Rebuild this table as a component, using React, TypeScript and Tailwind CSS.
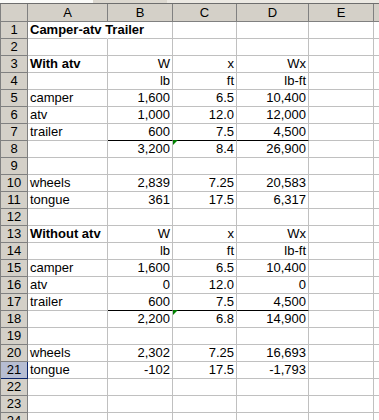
import React from "react";

type Cell = { t?: string; b?: boolean; r?: boolean; under?: boolean; tri?: boolean; overflow?: boolean };

const rows: Record<number, (Cell | null)[]> = {
  1: [{ t: "Camper-atv Trailer", b: true, overflow: true }],
  3: [{ t: "With atv", b: true }, { t: "W", r: true }, { t: "x", r: true }, { t: "Wx", r: true }],
  4: [null, { t: "lb", r: true }, { t: "ft", r: true }, { t: "lb-ft", r: true }],
  5: [{ t: "camper" }, { t: "1,600", r: true }, { t: "6.5", r: true }, { t: "10,400", r: true }],
  6: [{ t: "atv" }, { t: "1,000", r: true }, { t: "12.0", r: true }, { t: "12,000", r: true }],
  7: [{ t: "trailer" }, { t: "600", r: true, under: true }, { t: "7.5", r: true, under: true }, { t: "4,500", r: true, under: true }],
  8: [null, { t: "3,200", r: true }, { t: "8.4", r: true, tri: true }, { t: "26,900", r: true }],
  10: [{ t: "wheels" }, { t: "2,839", r: true }, { t: "7.25", r: true }, { t: "20,583", r: true }],
  11: [{ t: "tongue" }, { t: "361", r: true }, { t: "17.5", r: true }, { t: "6,317", r: true }],
  13: [{ t: "Without atv", b: true }, { t: "W", r: true }, { t: "x", r: true }, { t: "Wx", r: true }],
  14: [null, { t: "lb", r: true }, { t: "ft", r: true }, { t: "lb-ft", r: true }],
  15: [{ t: "camper" }, { t: "1,600", r: true }, { t: "6.5", r: true }, { t: "10,400", r: true }],
  16: [{ t: "atv" }, { t: "0", r: true }, { t: "12.0", r: true }, { t: "0", r: true }],
  17: [{ t: "trailer" }, { t: "600", r: true, under: true }, { t: "7.5", r: true, under: true }, { t: "4,500", r: true, under: true }],
  18: [null, { t: "2,200", r: true }, { t: "6.8", r: true, tri: true }, { t: "14,900", r: true }],
  20: [{ t: "wheels" }, { t: "2,302", r: true }, { t: "7.25", r: true }, { t: "16,693", r: true }],
  21: [{ t: "tongue" }, { t: "-102", r: true }, { t: "17.5", r: true }, { t: "-1,793", r: true }],
};

const colWidths = ["w-[80px]", "w-[65px]", "w-[64px]", "w-[72px]", "w-[65px]"];

function DataCell({ cell, w }: { cell: Cell | null; w: string }) {
  const c = cell || {};
  return (
    <div
      className={`relative h-[17px] shrink-0 ${w} border-r border-b ${c.overflow ? "border-r-transparent" : "border-r-[#c0c0c0]"} ${c.under ? "border-b-black" : "border-b-[#c0c0c0]"} flex items-center ${c.r ? "justify-end pr-[2px]" : "justify-start pl-[2px]"} whitespace-nowrap`}
    >
      {c.tri && (
        <div className="absolute left-0 -top-px w-0 h-0 border-t-[5px] border-t-[#008000] border-r-[5px] border-r-transparent" />
      )}
      {c.t && <span className={`relative z-10 leading-[16px] ${c.b ? "font-bold" : ""}`}>{c.t}</span>}
    </div>
  );
}

export default function App() {
  const rowNums = Array.from({ length: 24 }, (_, i) => i + 1);
  return (
    <div className="w-[379px] h-[420px] overflow-hidden bg-white text-[13px] text-black font-['Liberation_Sans',Arial,sans-serif]">
      <div className="flex h-[3px]">
        <div className="w-[93px] bg-[#fbfbf9]" />
        <div className="w-[74px] bg-[#dcd8d0]" />
        <div className="flex-1 bg-[#ece9e3]" />
      </div>
      <div className="h-px bg-[#6e6e6e]" />
      <div className="border-l border-[#808080]">
        <div className="flex h-[18px] bg-[#d4d0c8]">
          <div className="w-[27px] shrink-0 border-r border-b border-[#808080]" />
          {["A", "B", "C", "D", "E"].map((l, i) => (
            <div key={l} className={`${colWidths[i]} shrink-0 border-r border-b border-[#808080] flex items-center justify-center leading-[16px]`}>
              {l}
            </div>
          ))}
          <div className="flex-1 border-b border-[#808080]" />
        </div>
        {rowNums.map((n) => {
          const data = rows[n] || [];
          const active = n === 21;
          return (
            <div key={n} className="flex h-[17px]">
              <div
                className={`w-[27px] shrink-0 border-r border-b flex items-center justify-center leading-[16px] ${active ? "bg-[#b6bdd2] border-[#0a246a]" : "bg-[#d4d0c8] border-[#808080]"}`}
              >
                {n}
              </div>
              {colWidths.map((w, i) => (
                <DataCell key={i} cell={data[i] || null} w={w} />
              ))}
              <div className="flex-1 border-b border-[#c0c0c0]" />
            </div>
          );
        })}
      </div>
    </div>
  );
}
